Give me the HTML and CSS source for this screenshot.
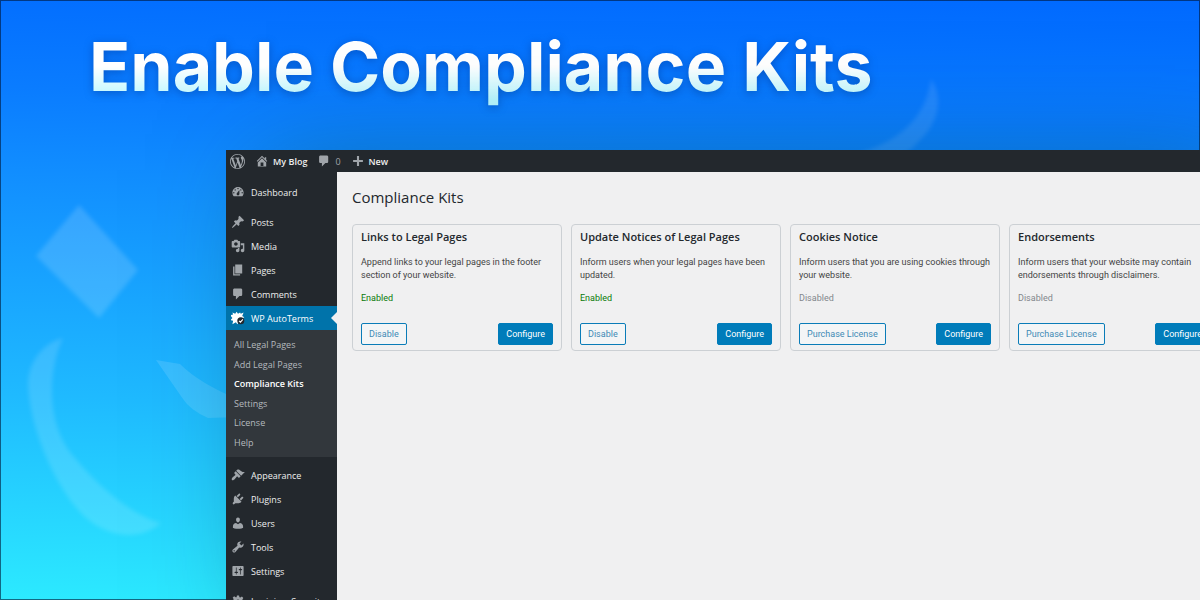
FILE: index.html
```html
<!DOCTYPE html>
<html lang="en">
<head>
<meta charset="utf-8">
<title>Enable Compliance Kits</title>
<link rel="stylesheet" href="styles.css">
</head>
<body>
<div class="stage">
  <svg class="shapes" width="1200" height="600" viewBox="0 0 1200 600" aria-hidden="true">
    <g fill="#fff">
      <path class="soft" opacity=".15" d="M79 205 L138 270 L99 318 L36 256Z"/>
      <path class="soft" opacity=".13" d="M63 338 C45 342 28 360 28 385 C30 430 55 485 80 512 C100 534 135 545 161 523 C140 518 105 495 75 458 C45 425 48 370 63 338Z"/>
      <path opacity=".12" d="M156 360 L180 364 Q200 384 240 400 L240 417 L208 418 Q190 410 183 399Z"/>
      <path class="soft" opacity=".1" d="M931 79 C945 100 937 125 918 142 Q912 150 900 156 L850 156 C890 145 925 125 931 79Z"/>
    </g>
  </svg>
  <header class="banner">
    <h1 class="headline">Enable Compliance Kits</h1>
  </header>
  <div class="window">
    <nav class="adminbar" aria-label="Toolbar">
      <a class="bar-link" href="#" aria-label="WordPress"><svg class="icon logo" viewBox="0 0 20 20"><path d="M20 10c0-5.51-4.49-10-10-10C4.48 0 0 4.49 0 10c0 5.52 4.48 10 10 10 5.51 0 10-4.48 10-10zM7.78 15.37L4.37 6.22c.55-.02 1.17-.08 1.17-.08.5-.06.44-1.13-.06-1.11 0 0-1.45.11-2.37.11-.18 0-.37 0-.58-.01C4.12 2.69 6.87 1.11 10 1.11c2.33 0 4.45.87 6.05 2.34-.68-.11-1.65.39-1.65 1.58 0 .74.45 1.36.9 2.1.35.61.55 1.36.55 2.46 0 1.49-1.4 5-1.4 5l-3.03-8.37c.54-.02.82-.17.82-.17.5-.05.44-1.25-.06-1.22 0 0-1.44.12-2.38.12-.87 0-2.33-.12-2.33-.12-.5-.03-.56 1.2-.06 1.22l.92.08 1.26 3.41zM17.41 10c.24-.64.74-1.87.43-4.25.7 1.29 1.05 2.71 1.05 4.25 0 3.29-1.73 6.24-4.4 7.78.97-2.59 1.94-5.2 2.92-7.78zM6.1 18.09C3.12 16.65 1.11 13.53 1.11 10c0-1.3.23-2.48.72-3.59C3.25 10.3 4.67 14.2 6.1 18.09zm4.03-6.63l2.58 6.98c-.86.29-1.76.45-2.71.45-.79 0-1.57-.11-2.29-.33.81-2.38 1.62-4.74 2.42-7.1z"/></svg></a>
      <a class="bar-link" href="#"><svg class="icon" viewBox="0 0 20 20"><path d="M16 8.5l1.53 1.53-1.06 1.06L10 4.6l-6.47 6.49-1.06-1.06L10 2.5l4 4v-2h2v4zm-6-2.46l6 5.99V18H4v-5.97zM12 17v-5H8v5h4z"/></svg>My Blog</a>
      <a class="bar-link count" href="#" aria-label="0 comments"><svg class="icon" viewBox="0 0 20 20"><path d="M5 2h9c1.1 0 2 .9 2 2v7c0 1.1-.9 2-2 2h-2l-5 5v-5H5c-1.1 0-2-.9-2-2V4c0-1.1.9-2 2-2z"/></svg>0</a>
      <a class="bar-link" href="#"><svg class="icon" viewBox="0 0 20 20"><path d="M17 8.500v3h-5.500V17h-3v-5.500H3v-3h5.500V3h3v5.500z"/></svg>New</a>
    </nav>
    <div class="workspace">
      <nav class="sidebar" aria-label="Main menu">
        <ul class="menu">
          <li><a class="item" href="#"><svg class="icon" viewBox="0 0 20 20"><path d="M3.760 16h12.480c1.100-1.370 1.760-3.110 1.760-5 0-4.420-3.580-8-8-8s-8 3.580-8 8c0 1.890.66 3.630 1.760 5zM10 4c.55 0 1 .45 1 1s-.45 1-1 1-1-.45-1-1 .45-1 1-1zM6 6c.55 0 1 .45 1 1s-.45 1-1 1-1-.45-1-1 .45-1 1-1zm8 0c.55 0 1 .45 1 1s-.45 1-1 1-1-.45-1-1 .45-1 1-1zm-5.370 5.550L12 7v6c0 1.100-.9 2-2 2s-2-.9-2-2c0-.57.24-1.080.63-1.450zM4 10c.55 0 1 .45 1 1s-.45 1-1 1-1-.45-1-1 .45-1 1-1zm12 0c.55 0 1 .45 1 1s-.45 1-1 1-1-.45-1-1 .45-1 1-1z"/></svg>Dashboard</a></li>
        </ul>
        <ul class="menu">
          <li><a class="item" href="#"><svg class="icon" viewBox="0 0 20 20"><path d="M10.440 3.020l1.820-1.820 6.360 6.350-1.830 1.820c-1.050-.68-2.480-.57-3.410.36l-.75.75c-.92.93-1.040 2.350-.35 3.410l-1.830 1.820-2.410-2.410-2.800 2.790c-.42.42-3.380 2.710-3.800 2.290s1.860-3.390 2.280-3.810l2.790-2.790L4.100 9.360l1.830-1.820c1.050.69 2.480.57 3.400-.36l.75-.75c.93-.92 1.050-2.350.36-3.410z"/></svg>Posts</a></li>
          <li><a class="item" href="#"><svg class="icon" viewBox="0 0 20 20"><path d="M13 11V4c0-.55-.45-1-1-1h-1.670L9 1H5L3.670 3H2c-.55 0-1 .45-1 1v7c0 .55.45 1 1 1h10c.55 0 1-.45 1-1zM7 4.500c1.380 0 2.500 1.120 2.500 2.500S8.380 9.500 7 9.500 4.500 8.380 4.500 7 5.620 4.500 7 4.500zM14 6h5v10.500c0 1.380-1.120 2.500-2.500 2.500S14 17.880 14 16.500s1.120-2.500 2.500-2.500c.17 0 .34.02.5.05V9h-3V6zm-4 8.050V13h2v3.500c0 1.380-1.120 2.500-2.500 2.500S7 17.880 7 16.500 8.120 14 9.500 14c.17 0 .34.02.5.05z"/></svg>Media</a></li>
          <li><a class="item" href="#"><svg class="icon" viewBox="0 0 20 20"><path d="M6 15V2h10v13H6zm-1 1h8v2H3V5h2v11z"/></svg>Pages</a></li>
          <li><a class="item" href="#"><svg class="icon" viewBox="0 0 20 20"><path d="M5 2h9c1.100 0 2 .9 2 2v7c0 1.100-.9 2-2 2h-2l-5 5v-5H5c-1.100 0-2-.9-2-2V4c0-1.100.9-2 2-2z"/></svg>Comments</a></li>
          <li>
            <a class="item active" href="#"><svg class="icon" viewBox="0 0 20 20"><path d="M2 2l4 2 2-3 2 3 3-2 1 2 4-2-2 5 3 2-4 2 2 6-6-1-2 3-2-3-5 3 1-5-4-1 3-3-3-4 4-1z"/><circle cx="14" cy="14" r="5" fill="#23282d"/><path d="M11.500 14l2 2 3.500-4" fill="none" stroke="#fff" stroke-width="1.500"/></svg>WP AutoTerms</a>
            <ul class="submenu">
              <li><a class="subitem" href="#">All Legal Pages</a></li>
              <li><a class="subitem" href="#">Add Legal Pages</a></li>
              <li><a class="subitem current" href="#" aria-current="page">Compliance Kits</a></li>
              <li><a class="subitem" href="#">Settings</a></li>
              <li><a class="subitem" href="#">License</a></li>
              <li><a class="subitem" href="#">Help</a></li>
            </ul>
          </li>
        </ul>
        <ul class="menu">
          <li><a class="item" href="#"><svg class="icon" viewBox="0 0 20 20"><path d="M14.480 11.060L7.410 3.990l1.500-1.500c.5-.56 2.300-.47 3.510.32 1.210.8 1.430 1.280 2.910 2.100 1.180.64 2.450 1.260 4.450.85zm-.71.71L6.700 4.700 4.930 6.470c-.39.39-.39 1.020 0 1.410l1.060 1.060c.39.39.39 1.030 0 1.420-.6.6-1.430 1.110-2.210 1.690-.35.26-.7.53-1.010.84C1.430 14.230.4 16.080 1.400 17.070c.99 1 2.840-.03 4.180-1.360.31-.31.58-.66.85-1.020.57-.78 1.080-1.610 1.690-2.210.39-.39 1.020-.39 1.410 0l1.060 1.060c.39.39 1.020.39 1.410 0z"/></svg>Appearance</a></li>
          <li><a class="item" href="#"><svg class="icon" viewBox="0 0 20 20"><path d="M13.110 4.360L9.870 7.600 8 5.730l3.240-3.240c.35-.34 1.050-.2 1.560.32.52.51.66 1.210.31 1.550zm-8 1.770l.91-1.120 9.010 9.010-1.190.84c-.71.71-2.630 1.160-3.820 1.160H6.140L4.900 17.260c-.59.59-1.540.59-2.120 0-.59-.58-.59-1.530 0-2.120l1.240-1.240v-3.880c0-1.130.4-3.190 1.090-3.890zm7.260 3.970l3.240-3.240c.34-.35 1.040-.21 1.550.31.52.51.66 1.210.31 1.550l-3.240 3.250z"/></svg>Plugins</a></li>
          <li><a class="item" href="#"><svg class="icon" viewBox="0 0 20 20"><path d="M10 9.250c-2.270 0-2.730-3.440-2.730-3.440C7 4.020 7.820 2 9.970 2c2.160 0 2.980 2.020 2.710 3.810 0 0-.41 3.440-2.680 3.440zm0 2.570L12.720 10c2.390 0 4.520 2.330 4.520 4.530v2.490s-3.650 1.130-7.240 1.130c-3.650 0-7.240-1.130-7.240-1.130v-2.490c0-2.250 1.940-4.480 4.470-4.480z"/></svg>Users</a></li>
          <li><a class="item" href="#"><svg class="icon" viewBox="0 0 20 20"><path d="M16.680 9.770c-1.340 1.340-3.300 1.670-4.950.99l-5.410 6.520c-.99.99-2.590.99-3.580 0s-.99-2.590 0-3.570l6.520-5.420c-.68-1.650-.35-3.610.99-4.950 1.280-1.280 3.120-1.620 4.720-1.060l-2.890 2.890 2.820 2.820 2.860-2.870c.53 1.580.18 3.390-1.080 4.650zM3.810 16.210c.4.39 1.040.39 1.430 0 .4-.4.4-1.040 0-1.430-.39-.4-1.030-.4-1.430 0-.39.39-.39 1.030 0 1.430z"/></svg>Tools</a></li>
          <li><a class="item" href="#"><svg class="icon" viewBox="0 0 20 20"><path d="M18 16V4c0-.55-.45-1-1-1H3c-.55 0-1 .45-1 1v12c0 .55.45 1 1 1h14c.55 0 1-.45 1-1zM8 11h1c.55 0 1 .45 1 1s-.45 1-1 1H8v1.500c0 .28-.22.5-.5.5s-.5-.22-.5-.5V13H6c-.55 0-1-.45-1-1s.45-1 1-1h1V5.500c0-.28.22-.5.5-.5s.5.22.5.5V11zm5-2h-1c-.55 0-1-.45-1-1s.45-1 1-1h1V5.500c0-.28.22-.5.5-.5s.5.22.5.5V7h1c.55 0 1 .45 1 1s-.45 1-1 1h-1v5.500c0 .28-.22.5-.5.5s-.5-.22-.5-.5V9z"/></svg>Settings</a></li>
        </ul>
        <ul class="menu">
          <li><a class="item" href="#"><svg class="icon" viewBox="0 0 20 20"><path fill-rule="evenodd" d="M8.500 2h3l.5 2.500 1.500.6 2.100-1.400 2 2-1.400 2.100.6 1.500 2.500.5v3l-2.500.5-.6 1.500 1.400 2.100-2 2-2.100-1.400-1.500.6-.5 2.500h-3L8 17.600 6.500 17l-2.100 1.400-2-2 1.400-2.100-.6-1.500L.7 12.300v-3l2.500-.5.6-1.500-1.400-2.100 2-2 2.100 1.400L8 4.500zM10 8a3 3 0 1 0 0 6 3 3 0 0 0 0-6z"/></svg>Loginizer Security</a></li>
        </ul>
      </nav>
      <main class="content">
        <h2 class="page-title">Compliance Kits</h2>
        <div class="cards">
          <section class="card">
            <h3 class="card-title">Links to Legal Pages</h3>
            <p class="card-text">Append links to your legal pages in the footer section of your website.</p>
            <p class="status enabled">Enabled</p>
            <div class="actions"><button class="button" type="button">Disable</button><button class="button primary" type="button">Configure</button></div>
          </section>
          <section class="card">
            <h3 class="card-title">Update Notices of Legal Pages</h3>
            <p class="card-text">Inform users when your legal pages have been updated.</p>
            <p class="status enabled">Enabled</p>
            <div class="actions"><button class="button" type="button">Disable</button><button class="button primary" type="button">Configure</button></div>
          </section>
          <section class="card">
            <h3 class="card-title">Cookies Notice</h3>
            <p class="card-text">Inform users that you are using cookies through your website.</p>
            <p class="status">Disabled</p>
            <div class="actions"><button class="button" type="button">Purchase License</button><button class="button primary" type="button">Configure</button></div>
          </section>
          <section class="card">
            <h3 class="card-title">Endorsements</h3>
            <p class="card-text">Inform users that your website may contain endorsements through disclaimers.</p>
            <p class="status">Disabled</p>
            <div class="actions"><button class="button" type="button">Purchase License</button><button class="button primary" type="button">Configure</button></div>
          </section>
        </div>
      </main>
    </div>
  </div>
</div>
</body>
</html>
```
FILE: styles.css
```css
* { box-sizing: border-box; }

body {
  margin: 0;
  font-family: "Open Sans", "Noto Sans", sans-serif;
  font-size: 9px;
}

h1, h2, h3, p, ul { margin: 0; padding: 0; }
ul { list-style: none; }
a { color: inherit; text-decoration: none; }

.stage {
  position: relative;
  display: flex;
  flex-direction: column;
  height: 100vh;
  overflow: hidden;
  background: linear-gradient(182deg, #0069ff 0%, #0a7cff 20%, #1290ff 35%, #1fbaff 68%, #2ceaff 100%);
}

/* Hairline frame round the whole banner */
.stage::before {
  content: "";
  position: absolute;
  inset: 0;
  border: 1px solid rgba(0, 20, 50, .6);
}

.shapes { position: absolute; top: 0; left: 0; }
.soft { filter: blur(2px); }

.banner {
  position: relative;
  flex: none;
  height: 150px;
  padding: 24px 89px 0;
}

.headline {
  font-family: Inter, sans-serif;
  font-size: 68px;
  font-weight: 700;
  line-height: 84px;
  white-space: nowrap;
  color: transparent;
  background: linear-gradient(#fff 50%, #b8f7ff 90%);
  background-clip: text;
  -webkit-background-clip: text;
  filter: drop-shadow(0 2px 5px rgba(0, 40, 120, .4));
}

.window {
  position: relative;
  flex: 1;
  display: flex;
  flex-direction: column;
  min-height: 0;
  margin-left: 226px;
  background: #f0f0f1;
  box-shadow: 40px 20px 100px rgba(0, 70, 80, .5);
}

.adminbar {
  display: flex;
  align-items: center;
  gap: 10px;
  height: 22px;
  padding-left: 4px;
  background: #23282d;
  color: #eee;
  font-weight: 600;
}

.bar-link { display: flex; align-items: center; gap: 4px; }
.count { color: #a0a5aa; font-weight: 400; }

.icon { flex: none; width: 14px; height: 14px; fill: #a0a5aa; }
.logo { width: 15px; height: 15px; }

.workspace { flex: 1; display: flex; min-height: 0; }

.sidebar {
  flex: none;
  display: flex;
  flex-direction: column;
  gap: 6px;
  width: 111px;
  padding-top: 8px;
  background: #23282d;
  color: #eee;
}

.item {
  position: relative;
  display: flex;
  align-items: center;
  gap: 6px;
  height: 24px;
  padding-left: 5px;
  white-space: nowrap;
}

.active { background: #0073aa; color: #fff; }
.active .icon { fill: #fff; }
.active::after {
  content: "";
  position: absolute;
  right: 0;
  border: 6px solid transparent;
  border-left-width: 0;
  border-right-color: #f0f0f1;
}

.submenu {
  display: grid;
  grid-auto-rows: 1fr;
  height: 127px;
  padding: 5px 0;
  background: #32373c;
  color: #b4b9be;
}
.subitem { display: block; padding-left: 8px; line-height: 19px; }
.current { color: #fff; font-weight: 600; }

.content { flex: 1; min-width: 0; padding: 14px 15px; color: #444; }

.page-title {
  font-size: 15px;
  font-weight: 400;
  line-height: 22px;
  color: #23282d;
}

.cards {
  display: grid;
  grid-template-columns: repeat(4, minmax(210px, 1fr));
  gap: 9px;
  margin-top: 16px;
}

.card {
  display: flex;
  flex-direction: column;
  padding: 4px 8px 5px;
  border: 1px solid #ccd0d4;
  border-radius: 4px;
  font-family: Roboto, "Open Sans", sans-serif;
}

.card-title {
  font-family: "Open Sans", "Noto Sans", sans-serif;
  font-size: 11px;
  font-weight: 600;
  line-height: 16px;
  color: #23282d;
}
.card-text { margin-top: 11px; line-height: 13px; }
.status { margin-top: 10px; line-height: 13px; color: #82878c; }
.enabled { color: #0a7a0a; }

.actions { display: flex; justify-content: space-between; margin-top: 18px; }

.button {
  height: 22px;
  padding: 0 7px;
  border: 1px solid #0a7cb8;
  border-radius: 2px;
  background: #f3f5f6;
  color: #3f8ab5;
  font: inherit;
}
.primary { background: #007cba; border-color: #007cba; color: #fff; }
```
